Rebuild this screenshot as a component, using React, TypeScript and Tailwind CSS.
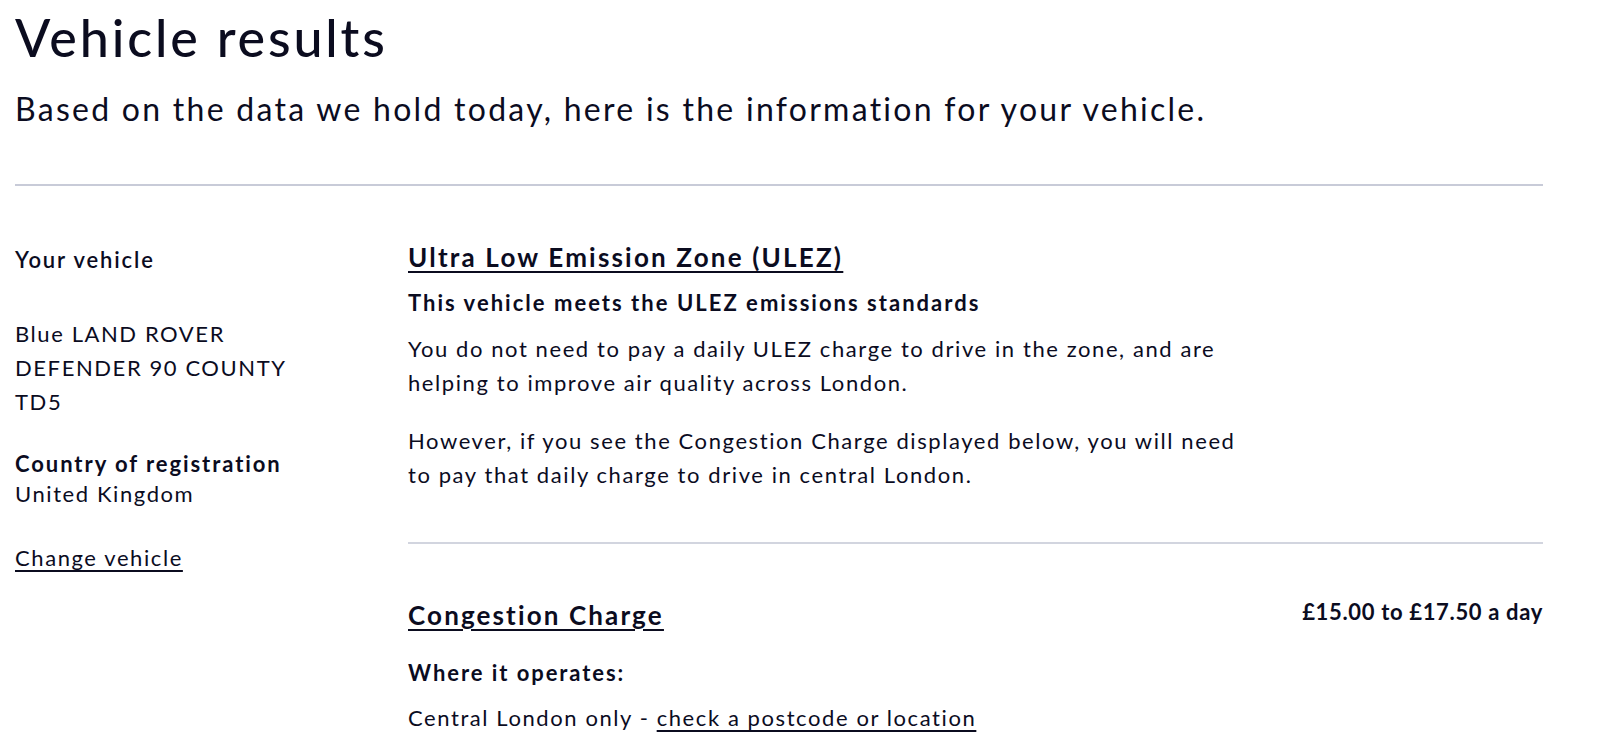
export default function App() {
  return (
    <div className="min-h-screen bg-white font-[Lato,sans-serif] text-[#0b0c1f]">
      <div className="pl-[15px] pr-[57px] pt-[7px]">
        <h1 className="text-[52px] font-medium leading-[60px] tracking-[0.055em]">Vehicle results</h1>
        <p className="mt-[22px] text-[32px] leading-[40px] tracking-[0.071em]">
          Based on the data we hold today, here is the information for your vehicle.
        </p>
        <hr className="mt-[55px] border-0 border-t-2 border-[#c8cbd8]" />

        <div className="flex">
          <aside className="w-[393px] shrink-0 pt-[57px] text-[22px] leading-[34px] tracking-[0.072em]">
            <h2 className="font-semibold tracking-[0.085em]">Your vehicle</h2>
            <p className="mt-[40px]">
              Blue LAND ROVER
              <br />
              DEFENDER 90 COUNTY
              <br />
              TD5
            </p>
            <h3 className="mt-[30px] font-bold leading-[30px] tracking-[0.088em]">
              Country of registration
            </h3>
            <p className="leading-[30px]">United Kingdom</p>
            <a href="#" className="mt-[32px] block underline underline-offset-[4px]">
              Change vehicle
            </a>
          </aside>

          <main className="flex-1 pt-[54px] text-[22px] leading-[34px] tracking-[0.072em]">
            <section className="pb-[50px]">
              <h2 className="text-[26px] font-bold tracking-[0.084em] underline decoration-2 underline-offset-[4px]">
                <a href="#">Ultra Low Emission Zone (ULEZ)</a>
              </h2>
              <p className="mt-[12px] font-bold tracking-[0.092em]">
                This vehicle meets the ULEZ emissions standards
              </p>
              <div className="max-w-[840px]">
                <p className="mt-[12px]">
                  You do not need to pay a daily ULEZ charge to drive in the zone, and are helping
                  to improve air quality across London.
                </p>
                <p className="mt-[24px]">
                  However, if you see the Congestion Charge displayed below, you will need to pay
                  that daily charge to drive in central London.
                </p>
              </div>
            </section>

            <hr className="border-0 border-t-2 border-[#d2d5df]" />

            <section className="pt-[54px]">
              <div className="flex items-start justify-between">
                <h2 className="text-[26px] font-bold tracking-[0.082em] underline decoration-2 underline-offset-[4px]">
                  <a href="#">Congestion Charge</a>
                </h2>
                <span className="-mt-[3px] font-bold tracking-[0.03em]">£15.00 to £17.50 a day</span>
              </div>
              <p className="mt-[24px] font-bold tracking-[0.088em]">Where it operates:</p>
              <p className="mt-[11px]">
                Central London only -{' '}
                <a href="#" className="underline underline-offset-[4px]">
                  check a postcode or location
                </a>
              </p>
            </section>
          </main>
        </div>
      </div>
    </div>
  )
}
